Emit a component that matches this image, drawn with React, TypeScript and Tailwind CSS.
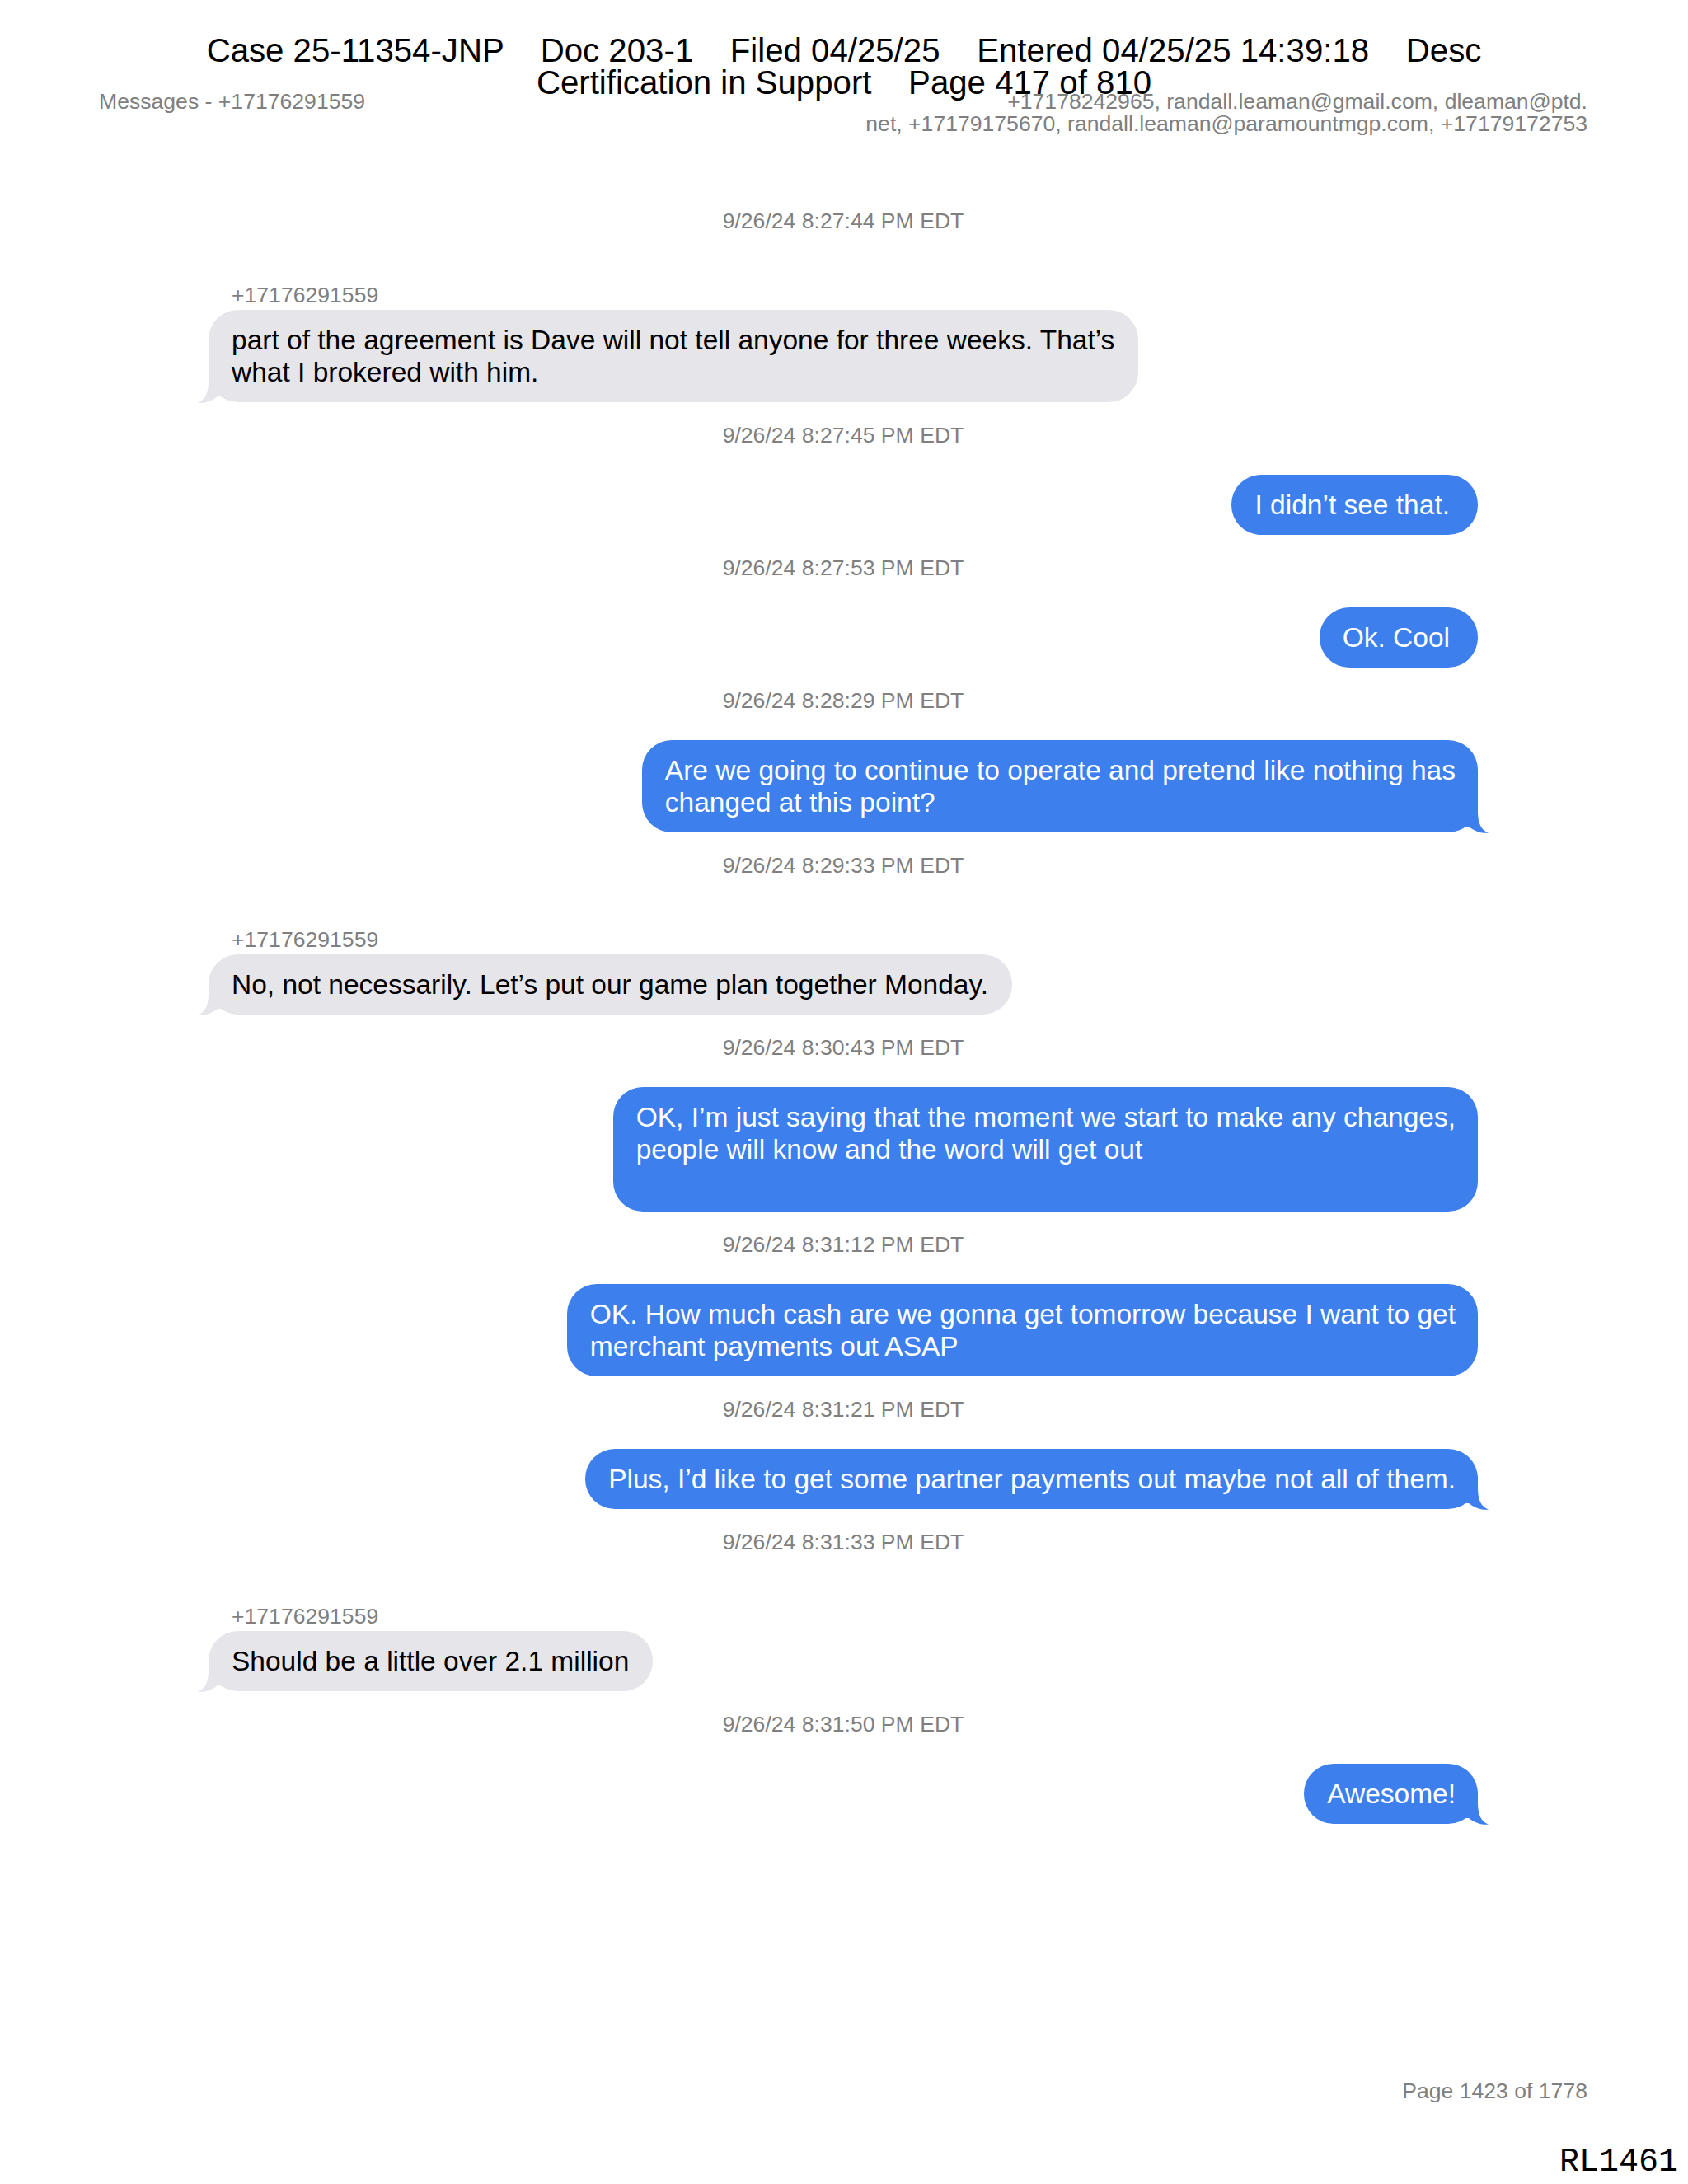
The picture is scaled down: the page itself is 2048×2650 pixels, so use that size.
import React from "react";

type Item =
  | { t: "ts"; text: string }
  | { t: "in"; sender: string; lines: string[]; tail: boolean }
  | { t: "out"; lines: string[]; tail: boolean; wide?: boolean };

const items: Item[] = [
  { t: "ts", text: "9/26/24 8:27:44 PM EDT" },
  {
    t: "in",
    sender: "+17176291559",
    lines: [
      "part of the agreement is Dave will not tell anyone for three weeks. That\u2019s",
      "what I brokered with him.",
    ],
    tail: true,
  },
  { t: "ts", text: "9/26/24 8:27:45 PM EDT" },
  { t: "out", lines: ["I didn\u2019t see that."], tail: false, wide: true },
  { t: "ts", text: "9/26/24 8:27:53 PM EDT" },
  { t: "out", lines: ["Ok. Cool"], tail: false, wide: true },
  { t: "ts", text: "9/26/24 8:28:29 PM EDT" },
  {
    t: "out",
    lines: [
      "Are we going to continue to operate and pretend like nothing has",
      "changed at this point?",
    ],
    tail: true,
  },
  { t: "ts", text: "9/26/24 8:29:33 PM EDT" },
  {
    t: "in",
    sender: "+17176291559",
    lines: ["No, not necessarily. Let\u2019s put our game plan together Monday."],
    tail: true,
  },
  { t: "ts", text: "9/26/24 8:30:43 PM EDT" },
  {
    t: "out",
    lines: [
      "OK, I\u2019m just saying that the moment we start to make any changes,",
      "people will know and the word will get out",
      "",
    ],
    tail: false,
  },
  { t: "ts", text: "9/26/24 8:31:12 PM EDT" },
  {
    t: "out",
    lines: [
      "OK. How much cash are we gonna get tomorrow because I want to get",
      "merchant payments out ASAP",
    ],
    tail: false,
  },
  { t: "ts", text: "9/26/24 8:31:21 PM EDT" },
  {
    t: "out",
    lines: ["Plus, I\u2019d like to get some partner payments out maybe not all of them."],
    tail: true,
  },
  { t: "ts", text: "9/26/24 8:31:33 PM EDT" },
  {
    t: "in",
    sender: "+17176291559",
    lines: ["Should be a little over 2.1 million"],
    tail: true,
  },
  { t: "ts", text: "9/26/24 8:31:50 PM EDT" },
  { t: "out", lines: ["Awesome!"], tail: true },
];

const TAIL_PATH = "M36 17 C36 32 41 40 49 42.5 C41 44 31 40 25 35 L13 35 L13 2 L36 2 Z";

function TailRight({ color }: { color: string }) {
  return (
    <svg
      className="absolute right-[-14px] bottom-[-2px]"
      width="50"
      height="44"
      viewBox="0 0 50 44"
    >
      <path d={TAIL_PATH} fill={color} />
    </svg>
  );
}

function TailLeft({ color }: { color: string }) {
  return (
    <svg
      className="absolute left-[-14px] bottom-[-2px] -scale-x-100"
      width="50"
      height="44"
      viewBox="0 0 50 44"
    >
      <path d={TAIL_PATH} fill={color} />
    </svg>
  );
}

function Lines({ lines }: { lines: string[] }) {
  return (
    <>
      {lines.map((l, i) => (
        <div key={i} className="h-[39px] whitespace-pre">
          {l}
        </div>
      ))}
    </>
  );
}

export default function App() {
  let prev: string = "start";
  return (
    <div className="relative w-[2048px] h-[2650px] bg-white font-['Liberation_Sans',Arial,sans-serif] text-black overflow-hidden">
      {/* Court filing stamp overlay */}
      <div className="absolute top-[42px] left-0 right-0 flex flex-col items-center text-[40.2px] leading-[39px] text-black z-10">
        <div className="whitespace-pre">
          {"Case 25-11354-JNP    Doc 203-1    Filed 04/25/25    Entered 04/25/25 14:39:18    Desc"}
        </div>
        <div className="whitespace-pre">{"Certification in Support    Page 417 of 810"}</div>
      </div>

      <div className="flex flex-col h-full">
        {/* Export header */}
        <div className="flex justify-between items-start pt-[110px] pl-[120px] pr-[122px] text-[26.6px] leading-[27px] text-[#7f7f7f]">
          <div className="whitespace-pre">Messages - +17176291559</div>
          <div className="flex flex-col items-end">
            <div className="whitespace-pre">+17178242965, randall.leaman@gmail.com, dleaman@ptd.</div>
            <div className="whitespace-pre">
              net, +17179175670, randall.leaman@paramountmgp.com, +17179172753
            </div>
          </div>
        </div>

        {/* Conversation */}
        <div className="flex flex-col mt-[88px] pl-[253px] pr-[255px]">
          {items.map((it, idx) => {
            const p = prev;
            prev = it.t;
            if (it.t === "ts") {
              return (
                <div
                  key={idx}
                  className={
                    p === "start"
                      ? "text-center text-[26.6px] leading-[32px] text-[#7f7f7f]"
                      : "mt-[24px] text-center text-[26.6px] leading-[32px] text-[#7f7f7f]"
                  }
                >
                  {it.text}
                </div>
              );
            }
            if (it.t === "in") {
              return (
                <div key={idx} className="flex flex-col items-start">
                  <div className="mt-[58px] pl-[28px] text-[26.6px] leading-[32px] text-[#7f7f7f]">
                    {it.sender}
                  </div>
                  <div className="relative mt-[2px] bg-[#e5e5ea] rounded-[36px] pl-[28px] pr-[29px] py-[17px] text-[33.5px] leading-[39px] text-black">
                    <Lines lines={it.lines} />
                    {it.tail && <TailLeft color="#e5e5ea" />}
                  </div>
                </div>
              );
            }
            return (
              <div key={idx} className="flex flex-col items-end">
                <div
                  className={
                    it.wide
                      ? "relative mt-[32px] bg-[#3d7fec] rounded-[36px] pl-[28px] pr-[34px] py-[17px] text-[33.5px] leading-[39px] text-white"
                      : "relative mt-[32px] bg-[#3d7fec] rounded-[36px] pl-[28px] pr-[27px] py-[17px] text-[33.5px] leading-[39px] text-white"
                  }
                >
                  <Lines lines={it.lines} />
                  {it.tail && <TailRight color="#3d7fec" />}
                </div>
              </div>
            );
          })}
        </div>

        {/* Footer */}
        <div className="mt-auto pb-[97px] pr-[122px] flex justify-end text-[26.6px] leading-[32px] text-[#7f7f7f]">
          Page 1423 of 1778
        </div>
      </div>

      {/* Bates stamp */}
      <div className="absolute right-[12px] top-[2604px] font-['Liberation_Mono',monospace] text-[40px] leading-[40px] text-black">
        RL1461
      </div>
    </div>
  );
}
